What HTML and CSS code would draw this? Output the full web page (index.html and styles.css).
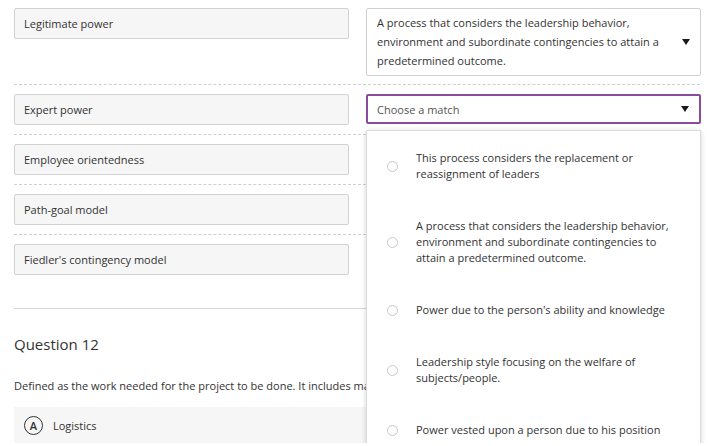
FILE: index.html
```html
<!DOCTYPE html>
<html>
<head>
<meta charset="utf-8">
<link rel="stylesheet" href="styles.css">
</head>
<body>
<div class="page">
  <div class="match-list">
    <div class="row first">
      <div class="term">Legitimate power</div>
      <div class="select">
        <span class="select-text">A process that considers the leadership behavior, environment and subordinate contingencies to attain a predetermined outcome.</span>
        <span class="caret"></span>
      </div>
    </div>
    <div class="row">
      <div class="term">Expert power</div>
      <div class="select-wrap">
        <div class="select focused">
          <span class="select-text placeholder">Choose a match</span>
          <span class="caret"></span>
        </div>
        <div class="menu">
          <div class="option"><span class="radio"></span><span class="opt-text">This process considers the replacement or reassignment of leaders</span></div>
          <div class="option"><span class="radio"></span><span class="opt-text">A process that considers the leadership behavior, environment and subordinate contingencies to attain a predetermined outcome.</span></div>
          <div class="option"><span class="radio"></span><span class="opt-text">Power due to the person's ability and knowledge</span></div>
          <div class="option"><span class="radio"></span><span class="opt-text">Leadership style focusing on the welfare of subjects/people.</span></div>
          <div class="option"><span class="radio"></span><span class="opt-text">Power vested upon a person due to his position</span></div>
        </div>
      </div>
    </div>
    <div class="row">
      <div class="term">Employee orientedness</div>
      <div></div>
    </div>
    <div class="row">
      <div class="term">Path-goal model</div>
      <div></div>
    </div>
    <div class="row last">
      <div class="term">Fiedler's contingency model</div>
      <div></div>
    </div>
  </div>
  <hr class="divider">
  <h2 class="q-title">Question 12</h2>
  <p class="q-text">Defined as the work needed for the project to be done. It includes materials, equipment and facilities.</p>
  <div class="answer"><span class="letter">A</span><span class="answer-text">Logistics</span></div>
</div>
</body>
</html>
```

FILE: styles.css
```css
html, body {
  margin: 0;
  padding: 0;
  background: #ffffff;
  overflow: hidden;
}
body {
  font-family: "Open Sans", "Liberation Sans", sans-serif;
  font-size: 11px;
  color: #333333;
}
.page {
  width: 686px;
  padding: 8px 8px 0 14px;
}
.row {
  display: grid;
  grid-template-columns: 335px 335px;
  column-gap: 17px;
  align-items: start;
  padding: 9px 0;
  border-bottom: 1px dashed #cfcfcf;
}
.row.first {
  padding-top: 0;
  padding-bottom: 8px;
}
.row.last {
  border-bottom: none;
}
.term {
  box-sizing: border-box;
  height: 31px;
  display: flex;
  align-items: center;
  padding: 0 9px;
  background: #f6f6f6;
  border: 1px solid #d2d2d2;
  border-radius: 2px;
  color: #333333;
}
.select-wrap {
  position: relative;
}
.select {
  box-sizing: border-box;
  position: relative;
  display: flex;
  align-items: center;
  padding: 4px 36px 5px 10px;
  border: 1px solid #d0d0d0;
  border-radius: 2px;
  background: #ffffff;
  line-height: 19px;
  color: #333333;
}
.select.focused {
  height: 30px;
  padding: 0 36px 0 9px;
  border: 2px solid #8c4a9c;
}
.placeholder {
  color: #555555;
}
.caret {
  position: absolute;
  right: 10px;
  top: 50%;
  margin-top: -3px;
  width: 0;
  height: 0;
  border-left: 4.5px solid transparent;
  border-right: 4.5px solid transparent;
  border-top: 6px solid #1a1a1a;
}
.menu {
  position: absolute;
  left: 0;
  top: 36px;
  width: 335px;
  box-sizing: border-box;
  background: #ffffff;
  border: 1px solid #dcdcdc;
  box-shadow: 0 1px 5px rgba(0, 0, 0, 0.18);
  padding-top: 1px;
  z-index: 5;
}
.option {
  display: flex;
  align-items: center;
  gap: 18px;
  padding: 18px 20px 18px 20px;
  line-height: 16px;
  color: #333333;
}
.radio {
  flex: none;
  box-sizing: border-box;
  width: 11px;
  height: 11px;
  border: 1px solid #c9c9c9;
  border-radius: 50%;
  background: #ffffff;
}
.opt-text {
  flex: 1;
}
.divider {
  margin: 24px 0 0 0;
  border: none;
  border-top: 1px solid #d6d6d6;
  height: 0;
}
.q-title {
  margin: 25px 0 0 0;
  font-size: 15px;
  font-weight: 400;
  line-height: 20px;
  color: #333333;
}
.q-text {
  margin: 24px 0 0 0;
  line-height: 16px;
  white-space: nowrap;
  color: #333333;
}
.answer {
  margin-top: 13px;
  height: 36px;
  display: flex;
  align-items: center;
  gap: 10px;
  padding-left: 10px;
  background: #f6f6f6;
}
.letter {
  box-sizing: border-box;
  width: 19px;
  height: 19px;
  border: 1px solid #333333;
  border-radius: 50%;
  display: flex;
  align-items: center;
  justify-content: center;
  font-weight: 600;
  font-size: 11px;
  color: #333333;
}
.answer-text {
  color: #333333;
}
```
